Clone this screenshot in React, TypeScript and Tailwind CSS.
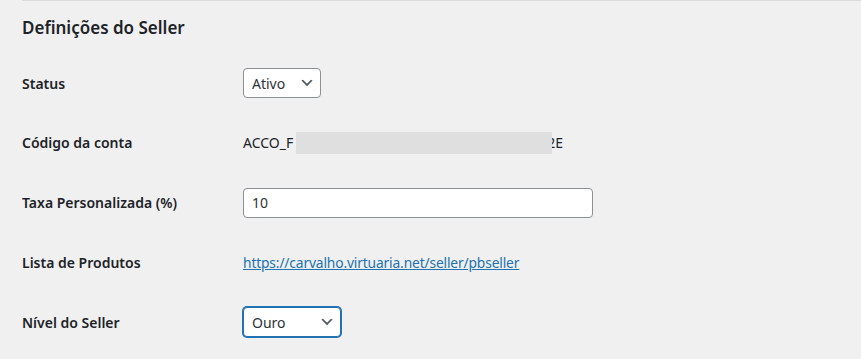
import React from 'react';

const baseFont = { fontFamily: '"Noto Sans", "Open Sans", sans-serif' };

function Chevron() {
  return (
    <svg width="16" height="16" viewBox="0 0 20 20" className="pointer-events-none absolute right-[6px] top-1/2 -translate-y-1/2">
      <path d="M5 6l5 5 5-5 2 1-7 7-7-7z" fill="#50575e" />
    </svg>
  );
}

function Row({ label, children, h }: { label: string; children: React.ReactNode; h: string }) {
  return (
    <div className={`flex items-center ${h}`}>
      <div className="w-[221px] shrink-0 text-[14px] font-semibold text-[#1d2327]">{label}</div>
      <div className="flex-1 text-[14px] text-[#1d2327]">{children}</div>
    </div>
  );
}

export default function App() {
  return (
    <div className="min-h-[359px] w-full overflow-hidden bg-[#f0f0f1] pl-[22px] text-[#1d2327]" style={baseFont}>
      <div className="h-px bg-[#dcdcde]" />
      <h2 className="mt-[16px] text-[17px] font-semibold leading-[22px]">Definições do Seller</h2>

      <div className="mt-[14px] flex flex-col">
        <Row label="Status" h="h-[60px]">
          <div className="relative inline-block">
            <select
              defaultValue="ativo"
              className="h-[30px] w-[78px] appearance-none rounded-[4px] border border-[#8c8f94] bg-white pl-[8px] pr-[24px] text-[14px] text-[#2c3338] outline-none"
            >
              <option value="ativo">Ativo</option>
              <option value="inativo">Inativo</option>
            </select>
            <Chevron />
          </div>
        </Row>

        <Row label="Código da conta" h="h-[59px]">
          <div className="flex items-center">
            <span>ACCO_F</span>
            <span className="relative z-10 ml-[3px] h-[22px] w-[256px] bg-[#dfdfdf]" />
            <span className="-ml-[5px]">2E</span>
          </div>
        </Row>

        <Row label="Taxa Personalizada (%)" h="h-[61px]">
          <input
            defaultValue="10"
            className="h-[30px] w-[350px] rounded-[4px] border border-[#8c8f94] bg-white px-[8px] text-[14px] text-[#2c3338] outline-none"
          />
        </Row>

        <Row label="Lista de Produtos" h="h-[59px]">
          <a href="#" className="text-[13.8px] tracking-[-0.15px] text-[#2271b1] underline">
            https://carvalho.virtuaria.net/seller/pbseller
          </a>
        </Row>

        <Row label="Nível do Seller" h="h-[60px]">
          <div className="relative inline-block">
            <select
              defaultValue="ouro"
              className="h-[30px] w-[98px] appearance-none rounded-[4px] border border-[#2271b1] bg-white pl-[8px] pr-[24px] text-[14px] text-[#2c3338] shadow-[0_0_0_1px_#2271b1] outline-none"
            >
              <option value="bronze">Bronze</option>
              <option value="prata">Prata</option>
              <option value="ouro">Ouro</option>
            </select>
            <Chevron />
          </div>
        </Row>
      </div>
    </div>
  );
}
